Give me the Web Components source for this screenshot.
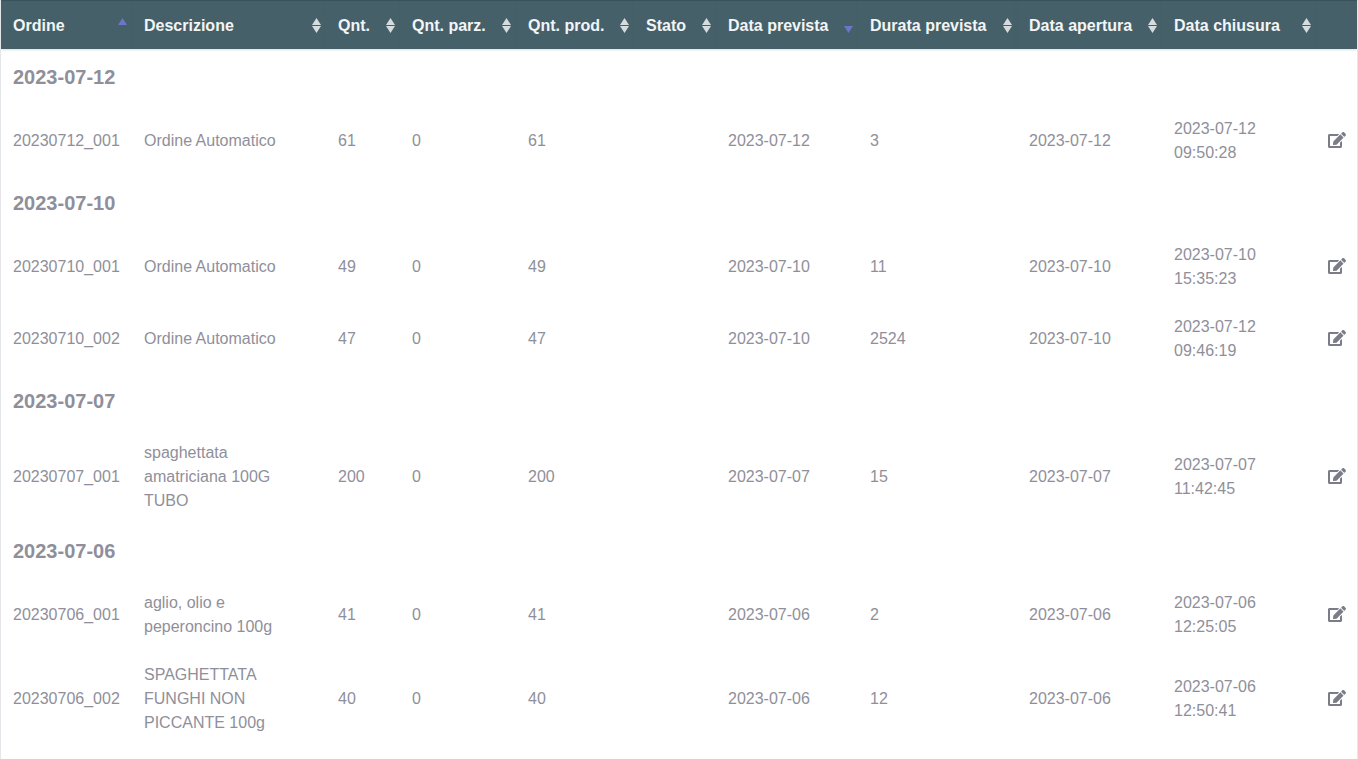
<!DOCTYPE html>
<html lang="it">
<head>
<meta charset="utf-8">
<title>Ordini</title>
<style>
  html, body { margin: 0; padding: 0; background: #fff; overflow: hidden; }
  body { font-family: "Liberation Sans", Arial, sans-serif; height: 759px; }
</style>
</head>
<body>
<orders-table></orders-table>
<script>
(function () {
  const EDIT = '<svg width="18" height="16" viewBox="0 0 576 512" fill="currentColor"><path d="M402.6 83.2l90.2 90.2c3.8 3.8 3.8 10 0 13.8L274.4 405.6l-92.8 10.3c-12.4 1.4-22.9-9.1-21.5-21.5l10.3-92.8L388.8 83.2c3.8-3.8 10-3.8 13.8 0zm162-22.9l-48.8-48.8c-15.2-15.2-39.9-15.2-55.2 0l-35.4 35.4c-3.8 3.8-3.8 10 0 13.8l90.2 90.2c3.8 3.8 10 3.8 13.8 0l35.4-35.4c15.2-15.3 15.2-40 0-55.2zM384 346.2V448H64V128h229.8c3.2 0 6.2-1.3 8.5-3.5l40-40c7.6-7.6 2.2-20.5-8.5-20.5H48C21.5 64 0 85.5 0 112v352c0 26.5 21.5 48 48 48h352c26.5 0 48-21.5 48-48V306.2c0-10.7-12.9-16-20.5-8.5l-40 40c-2.2 2.3-3.5 5.3-3.5 8.5z"/></svg>';

  // [label, width, sort state]
  const COLS = [
    ['Ordine', 131, 'asc'],
    ['Descrizione', 194, ''],
    ['Qnt.', 74, ''],
    ['Qnt. parz.', 116, ''],
    ['Qnt. prod.', 118, ''],
    ['Stato', 82, ''],
    ['Data prevista', 142, 'desc'],
    ['Durata prevista', 159, ''],
    ['Data apertura', 145, ''],
    ['Data chiusura', 154, ''],
    ['', 41, null],
  ];

  // a string is a date group, an array is an order
  const ROWS = [
    '2023-07-12',
    ['20230712_001', 'Ordine Automatico', '61', '0', '61', '', '2023-07-12', '3', '2023-07-12', '2023-07-12 09:50:28'],
    '2023-07-10',
    ['20230710_001', 'Ordine Automatico', '49', '0', '49', '', '2023-07-10', '11', '2023-07-10', '2023-07-10 15:35:23'],
    ['20230710_002', 'Ordine Automatico', '47', '0', '47', '', '2023-07-10', '2524', '2023-07-10', '2023-07-12 09:46:19'],
    '2023-07-07',
    ['20230707_001', 'spaghettata amatriciana 100G TUBO', '200', '0', '200', '', '2023-07-07', '15', '2023-07-07', '2023-07-07 11:42:45'],
    '2023-07-06',
    ['20230706_001', 'aglio, olio e peperoncino 100g', '41', '0', '41', '', '2023-07-06', '2', '2023-07-06', '2023-07-06 12:25:05'],
    ['20230706_002', 'SPAGHETTATA FUNGHI NON PICCANTE 100g', '40', '0', '40', '', '2023-07-06', '12', '2023-07-06', '2023-07-06 12:50:41'],
  ];

  class SortIcon extends HTMLElement {
    connectedCallback() {
      const state = this.getAttribute('state') || '';
      const root = this.attachShadow({ mode: 'open' });
      const up = '<path d="M0 7 4.5 0 9 7z"/>';
      const down = '<path d="M0 8 4.5 15 9 8z"/>';
      let shape = up + down;
      if (state === 'asc') shape = `<g fill="#6c76c4">${up}</g>`;
      if (state === 'desc') shape = `<g fill="#6c76c4">${down}</g>`;
      root.innerHTML = `
        <style>
          :host{ display:block; width:9px; height:15px; color:#d5dcdf; flex:none; }
          svg{ display:block; }
        </style>
        <svg width="9" height="15" viewBox="0 0 9 15" fill="currentColor">${shape}</svg>`;
    }
  }
  customElements.define('sort-icon', SortIcon);

  class OrdersTable extends HTMLElement {
    connectedCallback() {
      const root = this.attachShadow({ mode: 'open' });
      const cols = COLS.map(([, w]) => `<col style="width:${w}px">`).join('');
      const head = COLS.map(([label, , sort]) =>
        `<th><div class="th">${label}${sort === null ? '' : `<sort-icon state="${sort}"></sort-icon>`}</div></th>`
      ).join('');
      const body = ROWS.map((r) => {
        if (typeof r === 'string') return `<tr class="group"><td colspan="11">${r}</td></tr>`;
        return `<tr>${r.map((c) => `<td>${c}</td>`).join('')}<td class="act">${EDIT}</td></tr>`;
      }).join('');
      root.innerHTML = `
        <style>
          :host{ display:block; width:1358px; height:759px; box-sizing:border-box; border-left:1px solid #e4e6ea; border-right:1px solid #e4e6ea;
            font-family:"Liberation Sans",Arial,sans-serif; font-size:16px; line-height:24px; color:#8f8f9b; overflow:hidden; }
          table{ border-collapse:collapse; table-layout:fixed; width:1356px; }
          th{ background:#456068; color:#f2f5f6; font-weight:700; text-align:left; height:49px; padding:2px 5px 0 12px; box-sizing:border-box;
            box-shadow:inset 0 1px #3a525a, 0 1px 2px rgba(69,96,104,.2); }
          .th{ display:flex; align-items:center; justify-content:space-between; white-space:nowrap; }
          td{ padding:12px; vertical-align:middle; }
          tr.group td{ font-size:20px; font-weight:700; height:54px; box-sizing:border-box; padding:0 12px 2px; }
          tr.group:first-child td{ height:56px; padding-bottom:0; }
          .act{ padding:0 0 0 12px; color:#7c7c88; }
          .act svg{ display:block; margin-bottom:2px; }
        </style>
        <table>
          <colgroup>${cols}</colgroup>
          <thead><tr>${head}</tr></thead>
          <tbody>${body}</tbody>
        </table>`;
    }
  }
  customElements.define('orders-table', OrdersTable);
})();
</script>
</body>
</html>
